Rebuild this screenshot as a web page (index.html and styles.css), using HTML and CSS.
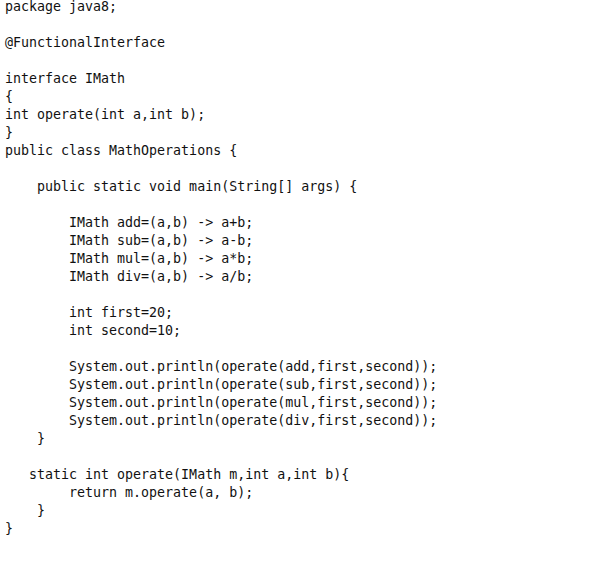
FILE: index.html
```html
<!DOCTYPE html>
<html>
<head>
<meta charset="utf-8">
<link rel="stylesheet" href="styles.css">
</head>
<body>
<pre class="code">package java8;

@FunctionalInterface

interface IMath
{
int operate(int a,int b);
}
public class MathOperations {

    public static void main(String[] args) {

        IMath add=(a,b) -&gt; a+b;
        IMath sub=(a,b) -&gt; a-b;
        IMath mul=(a,b) -&gt; a*b;
        IMath div=(a,b) -&gt; a/b;

        int first=20;
        int second=10;

        System.out.println(operate(add,first,second));
        System.out.println(operate(sub,first,second));
        System.out.println(operate(mul,first,second));
        System.out.println(operate(div,first,second));
    }

   static int operate(IMath m,int a,int b){
        return m.operate(a, b);
    }
}</pre>
</body>
</html>
```
FILE: styles.css
```css
html, body {
  margin: 0;
  padding: 0;
  background: #ffffff;
}
.code {
  margin: -2px 0 0 0;
  padding: 0 0 0 5px;
  font-family: "DejaVu Sans Mono", "Liberation Mono", monospace;
  font-size: 13.3px;
  line-height: 18px;
  color: #111111;
  white-space: pre;
}
```
